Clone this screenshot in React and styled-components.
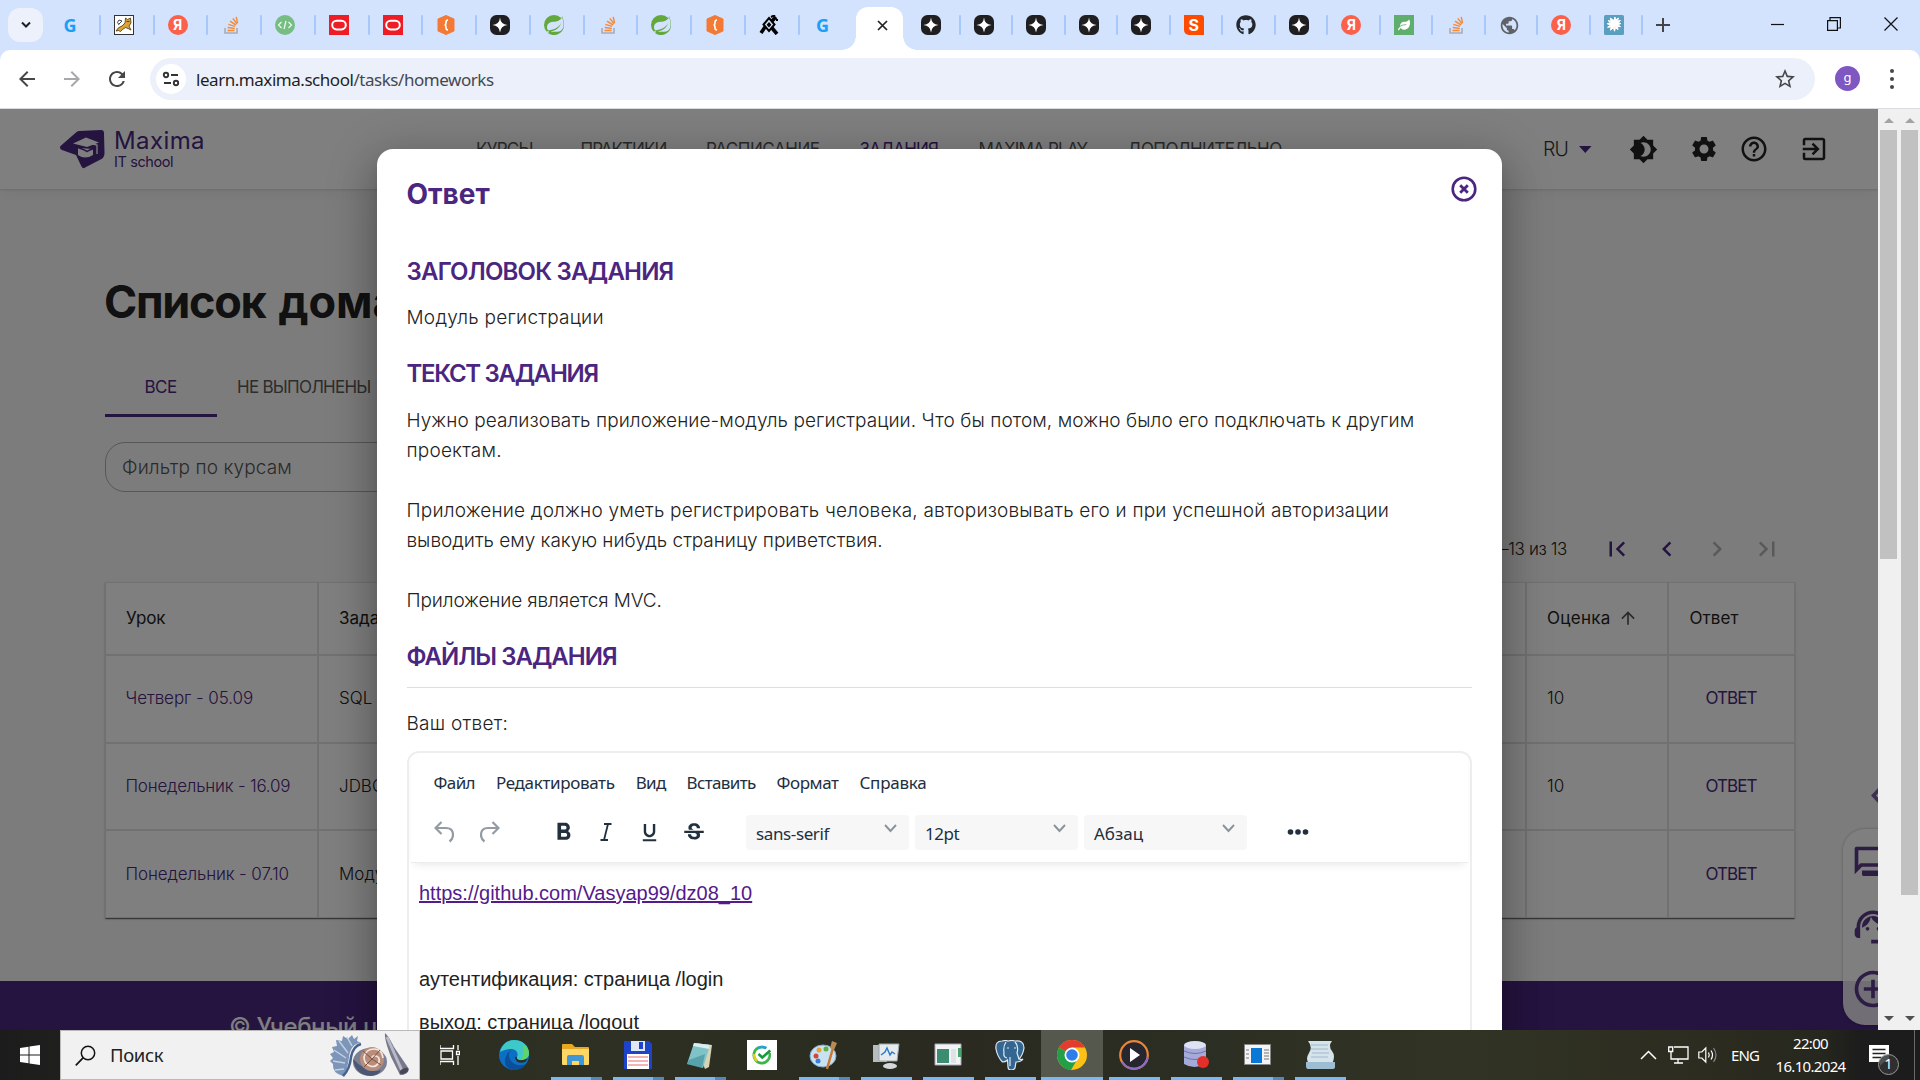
import React from 'react';
import styled, { createGlobalStyle, css } from 'styled-components';
import {
  MdBrightness4, MdSettings, MdHelpOutline, MdExitToApp, MdFirstPage, MdLastPage,
  MdKeyboardArrowLeft, MdKeyboardArrowRight, MdArrowUpward, MdOutlineQuestionAnswer,
  MdSupportAgent, MdAddCircleOutline, MdFormatBold, MdOutlineStrikethroughS, MdStarOutline,
  MdPublic, MdArrowBack, MdArrowForward, MdRefresh, MdFormatUnderlined,
} from 'react-icons/md';
import { FaGithub, FaLeaf } from 'react-icons/fa';
import { SiSpring, SiPostgresql } from 'react-icons/si';

const gilroy = '"Inter", "Noto Sans", sans-serif';
const segoe = '"Noto Sans", "Open Sans", sans-serif';
const purple = '#4b2680';

const Global = createGlobalStyle`
  *, *::before, *::after { box-sizing: border-box; }
  body { margin: 0; overflow: hidden; background: #fff; }
  svg { display: block; flex: none; }
`;
const Txt = styled.span`
  display: inline-block;
  white-space: nowrap;
  letter-spacing: ${(p) => p.$ls || 0}px;
`;
const Screen = styled.div`
  width: 1920px; height: 1080px; display: flex; flex-direction: column; overflow: hidden;
  font-family: ${segoe};
`;

/* ---------- browser chrome ---------- */
const TabStrip = styled.div`
  height: 50px; flex: none; background: #d3e2fd; display: flex; align-items: stretch;
`;
const TabSearch = styled.div`
  width: 35px; height: 34px; margin: 8px 4px 0 8px; border-radius: 12px; background: #ecf1fc;
  display: grid; place-items: center;
`;
const Tab = styled.div`
  width: ${(p) => p.$w}px; flex: none; display: flex; align-items: center; justify-content: space-between;
  padding-left: 13px;
  &::after { content: ''; width: 2px; height: 20px; border-radius: 1px; background: #a8c7fa; }
`;
const ActiveTab = styled.div`
  width: 47px; height: 43px; margin: 7px 5px 0 3px; background: #fff; border-radius: 12px 12px 0 0;
  display: grid; place-items: center; padding: 0 0 7px 6px; position: relative;
  &::before, &::after {
    content: ''; position: absolute; bottom: 0; width: 14px; height: 14px;
  }
  &::before { left: -14px; background: radial-gradient(circle at 0 0, transparent 13.5px, #fff 14px); }
  &::after { right: -14px; background: radial-gradient(circle at 100% 0, transparent 13.5px, #fff 14px); }
`;
const Fav = styled.span`
  width: 20px; height: 20px; display: flex; align-items: center; justify-content: center;
  font: ${(p) => p.$font || `700 15px/20px ${segoe}`};
  color: ${(p) => p.$fg || '#fff'}; background: ${(p) => p.$bg || 'none'}; border-radius: ${(p) => p.$r || 0};
`;
const NewTab = styled.div`display: grid; place-items: center; width: 40px;`;
const WindowButtons = styled.div`
  margin-left: auto; display: flex; align-items: center; gap: 43px; padding: 0 22px 2px 0;
`;
const Toolbar = styled.div`
  height: 59px; flex: none; display: flex; align-items: center; padding: 0 18px 1px 13px;
  background: #fff; border-radius: 10px 10px 0 0; position: relative; border-bottom: 1px solid #d9dbdf;
`;
const ToolbarBack = styled.div`background: linear-gradient(#d3e2fd 50%, #fff 50%);`;
const NavIcon = styled.div`width: 45px; display: flex; padding-left: 2px; color: ${(p) => p.$c || '#474747'};`;
const AddressBar = styled.div`
  width: 1665px; height: 42px; margin-left: 2px; border-radius: 21px; background: #ecf0fa; display: flex; align-items: center;
  padding: 0 18px 0 6px; color: #474747;
`;
const SiteInfo = styled.div`width: 30px; height: 30px; border-radius: 50%; background: #fff; display: grid; place-items: center;`;
const Url = styled.div`margin-left: 10px; padding-top: 2px; flex: 1; font-size: 17px; line-height: 24px; color: #444850; b { font-weight: 400; color: #1f1f1f; }`;
const Avatar = styled.div`
  width: 25px; height: 25px; margin-left: 20px; border-radius: 50%; background: #7e57c2; color: #fff;
  font-size: 13px; line-height: 22px; text-align: center;
`;
const Dots = styled.div`display: grid; gap: 4px; margin: 0 8px 0 auto; i { width: 4px; height: 4px; border-radius: 50%; background: #474747; }`;

/* ---------- page ---------- */
const Viewport = styled.div`height: 921px; flex: none; display: flex; overflow: hidden;`;
const Page = styled.div`
  position: relative; width: 1878px; height: 921px; overflow: hidden; background: #f9f9f9; font-family: ${gilroy}; color: #222;
`;
const Header = styled.header`
  height: 80px; background: #fff; display: flex; align-items: center; padding: 0 49px 0 60px;
  position: relative; box-shadow: 0 1px 2px rgba(0,0,0,.12), 0 6px 14px rgba(0,0,0,.04);
`;
const LogoText = styled.div`
  margin-left: 9px; width: 362px; color: ${purple};
  div { font-size: 24px; line-height: 26px; }
  div + div { font-size: 14.5px; line-height: 16px; }
`;
const Nav = styled.nav`display: flex; font-size: 17px; line-height: 24px; color: #555; padding-bottom: 1px;`;
const NavItem = styled.div`width: ${(p) => p.$w}px; color: ${(p) => (p.$on ? purple : '#555')};`;
const HeaderTools = styled.div`margin-left: auto; display: flex; align-items: center; color: #222;`;
const Lang = styled.div`
  display: flex; align-items: center; font-size: 19.5px; font-weight: 300; color: #333; margin-right: 29px;
  svg { margin-left: 2px; color: ${purple}; }
`;
const ToolIcon = styled.div`width: 30px; margin-right: ${(p) => p.$mr}px;`;
const Content = styled.main`padding: 0 83px 0 105px;`;
const PageTitle = styled.h1`
  display: flex; gap: 13px; margin: 83px 0 0 -1px; font-size: 45px; line-height: 60px; font-weight: 700; color: #222;
`;
const Tabs = styled.div`display: flex; margin-top: 25px; height: 60px; font-size: 17px;`;
const PageTab = styled.div`
  display: flex; align-items: center; padding: 3px 0 0 ${(p) => p.$pl}px; width: ${(p) => p.$w}px;
  color: ${(p) => (p.$on ? purple : '#5a5a5a')}; border-bottom: 3px solid ${(p) => (p.$on ? purple : 'transparent')};
`;
const Filter = styled.div`
  margin-top: 25px; width: 600px; height: 50px; border: 1px solid #aeaeae; border-radius: 20px; padding-left: 16px;
  display: flex; align-items: center; font-size: 19px; font-weight: 300; color: #555;
`;
const Pagination = styled.div`
  height: 62px; margin: 26px 0 2px; padding-right: 3px; display: flex; align-items: center; justify-content: flex-end;
  font-size: 17px; font-weight: 300; color: #222;
`;
const PageRange = styled.div`margin-right: 25px;`;
const PageButton = styled.div`width: 50px; display: grid; place-items: center; color: ${(p) => (p.$off ? '#b3b3b3' : purple)};`;
const Table = styled.div`
  border: 1px solid #e2e2e2; background: #fff; box-shadow: 0 2px 1px -1px rgba(0,0,0,.35), 0 1px 1px rgba(0,0,0,.25), 0 1px 3px rgba(0,0,0,.12);
`;
const Row = styled.div`
  display: grid; grid-template-columns: 213px 1fr 142px 125px; height: ${(p) => (p.$head ? 73 : p.$last ? 86 : 87.5)}px;
  font-size: 17px; font-weight: ${(p) => (p.$head ? 400 : 300)};
  &:last-child > div { border-bottom: 0; }
`;
const Cell = styled.div`
  display: flex; align-items: center; gap: 7px; padding: 0 0 1px ${(p) => p.$pl || 20}px; border-right: 2px solid #e2e2e2; border-bottom: 2px solid #e2e2e2;
  color: ${(p) => (p.$link ? purple : '#222')};
  font-weight: ${(p) => p.$fw || 'inherit'};
  &:last-child { border-right: 0; }
  svg { color: #555; }
`;
const Footer = styled.footer`
  margin-top: 63px; height: 100px; background: #4a2680; color: #fff; padding: 31px 0 0 229px;
  font-size: 24px; line-height: 30px; font-weight: 500; white-space: nowrap;
`;
const SideArrow = styled.div`position: absolute; left: 1870px; top: 677px;`;
const SidePanel = styled.div`
  position: absolute; left: 1843px; top: 720px; width: 60px; height: 196px; border-radius: 22px;
  background: rgba(255,255,255,.84); box-shadow: 0 0 3px rgba(0,0,0,.3); padding: 14px 0 0 8px;
  display: flex; flex-direction: column; gap: 18px; color: #5b3b8a;
`;
const Backdrop = styled.div`position: absolute; inset: 0; background: rgba(0,0,0,.5);`;

/* ---------- dialog ---------- */
const Dialog = styled.section`
  position: absolute; left: 377px; top: 40px; width: 1125px; height: 940px; padding: 25px 30px 0; background: #fff;
  border-radius: 16px 16px 0 0;
  box-shadow: 0 11px 15px -7px rgba(0,0,0,.2), 0 24px 38px 3px rgba(0,0,0,.14), 0 9px 46px 8px rgba(0,0,0,.18);
`;
const DialogHead = styled.div`display: flex; justify-content: space-between; svg { margin: 1px -6px 0 0; }`;
const DialogTitle = styled.h2`margin: 0 0 0 -.5px; font-size: 28px; line-height: 40px; font-weight: 700; color: ${purple};`;
const SectionTitle = styled.h3`margin: ${(p) => p.$mt}px 0 0 -.5px; font-size: 24px; line-height: 36px; font-weight: 600; color: ${purple};`;
const Copy = styled.div`margin: ${(p) => p.$mt}px 0 0 -.5px; font-size: 19px; line-height: 30px; font-weight: 300; color: #222; min-height: 30px;`;
const Line = styled.div`height: 30px;`;
const Rule = styled.hr`margin: 12px 0 0; border: 0; height: 1px; background: #dedede;`;
const Editor = styled.div`
  margin-top: 12px; height: 400px; border: 2px solid #eee; border-radius: 12px; font-family: ${segoe}; color: #222f3e;
`;
const EditorHead = styled.div`
  padding: 18px 0 12px 25px; margin: 0 2px; box-shadow: 0 1px 0 #ececec, 0 6px 8px -4px rgba(34,47,62,.13);
`;
const MenuBar = styled.div`display: flex; gap: 21px; margin-left: -2.5px; font-size: 17px; line-height: 24px;`;
const Tools = styled.div`display: flex; align-items: center; height: 35px; margin: 20px 0 0 -2px;`;
const Tool = styled.div`width: 20px; display: flex; justify-content: center; margin-right: ${(p) => p.$mr}px; padding-bottom: ${(p) => (p.$low ? 0 : 2)}px;`;
const Select = styled.div`
  width: 162.5px; height: 35px; margin-right: 6.5px; border-radius: 4px; background: #f7f7f7; display: flex; justify-content: space-between;
  padding: 7px 12px 0 10px; font-size: 17px; line-height: 24px; svg { margin-top: -3px; }
`;
const More = styled.div`margin-left: 33px; padding-bottom: 2px;`;
const EditorBody = styled.div`
  padding: 16px 0 0 10px; font: 20px/30px "Liberation Sans", Arial, sans-serif; color: #222;
  a { color: #551a8b; text-decoration: underline; }
  p { margin: 0; height: 43px; }
`;

/* ---------- scrollbars ---------- */
const Scrollbar = styled.div`
  width: 21px; background: #f0f0f0; display: flex; flex-direction: column; align-items: center;
  padding: 9px 0;
`;
const Arrow = styled.i`
  border: 5px solid transparent; width: 0; height: 0;
  ${(p) => (p.$up ? css`border-top: 0; border-bottom-color: #a3a3a3;` : css`border-bottom: 0; border-top-color: #505050; margin-top: auto;`)}
`;
const Thumb = styled.div`width: 17px; margin-top: 7px; height: ${(p) => p.$h}px; background: #c1c1c1;`;

/* ---------- taskbar ---------- */
const Taskbar = styled.div`
  height: 50px; flex: none; display: flex; color: #fff;
  background: linear-gradient(90deg, #1c1c1c 0, #1f1f1d 60px, #2c2e23 420px, #2d3022 600px, #2a2a20 950px, #2b2e22 1200px, #313424 1450px, #2c2c20 1700px, #26271e 1820px, #1c1c1c 1860px);
`;
const Start = styled.div`width: 60px; display: grid; place-items: center;`;
const Search = styled.div`
  width: 360px; background: #f1f1f1; border: 1px solid #b9b9b9; display: flex; align-items: center; color: #222; padding: 0 8px 0 14px;
  font-size: 18.5px; svg:last-child { margin-left: auto; }
`;
const SearchLabel = styled.div`margin-left: 14px; line-height: 24px;`;
const TaskView = styled.div`width: 63px; display: grid; place-items: center; padding-right: 3px;`;
const TaskApp = styled.div`
  width: 62px; display: flex; flex-direction: column; align-items: center; padding-top: 10px;
  background: ${(p) => (p.$active ? '#55584c' : 'none')};
`;
const Bar = styled.div`
  margin-top: auto; height: 3px; width: ${(p) => (p.$full ? 62 : 51)}px;
  background: ${(p) => (p.$kind === 'stack' ? 'linear-gradient(90deg,#76b9f5 40px,#5488ba 40px)' : p.$kind ? '#76b9f5' : 'none')};
`;
const Tray = styled.div`margin-left: auto; display: flex; align-items: center;`;
const TrayItem = styled.div`width: ${(p) => p.$w}px; font-size: 15px;`;
const Clock = styled.div`width: 91px; text-align: center; font-size: 15px; line-height: 23px;`;
const ShowDesktop = styled.div`width: 6px; height: 50px; border-left: 1px solid #6a6a66;`;
const Notify = styled.div`position: relative; width: 45px; height: 50px; padding: 15px 0 0 0;`;
const Badge = styled.div`
  position: absolute; left: 9px; top: 24px; width: 21px; height: 21px; border: 1px solid #9a9a9a; border-radius: 50%; background: rgba(50,50,50,.85);
  font-size: 14px; line-height: 18px; text-align: center;
`;

const S = ({ s = 20, w, h, vb = 20, children }) => (
  <svg width={w || s} height={h || s} viewBox={`0 0 ${w || vb} ${h || vb}`} fill="none">{children}</svg>
);

const favs = {
  g: <Fav $fg="#1a9ff5" $font={`700 18px/20px ${segoe}`}>G</Fav>,
  cat: <S><rect x=".5" y=".5" width="19" height="19" fill="#fff" stroke="#333" /><path d="M2 16q2-4 6-5l3-3 .5-5L13.500 4.500l3-1.500L17 8l-2 3 2 4-3-1.500-2.500-1-3 2-2 2-2-1z" fill="#d9a33c" stroke="#4a3510" strokeWidth=".8" /><path d="M5 10q-3-3 0-5l3 1-3 3M12.500 6.500h3" stroke="#444" strokeWidth="1" /></S>,
  ya: <Fav $bg="#fc5f4a" $r="50%" $font={`700 14px/20px ${gilroy}`}>Я</Fav>,
  so: <S><path d="M4 13v5h12v-5" stroke="#a9adb3" strokeWidth="1.6" /><path d="M6.5 15.5h7M6.7 12.6l7 .9M7.3 9.4l6.7 2M9 6.2l6 3.8M11.8 3.4l4.4 5.6M15.2 1.8l1.4 6" stroke="#f48c3a" strokeWidth="1.5" /></S>,
  code: <S><circle cx="10" cy="10" r="10" fill="#76bd84" /><path d="M6.5 7l-3 3 3 3M13.5 7l3 3-3 3M11 6l-2 8" stroke="#e8f6ea" strokeWidth="1.3" /></S>,
  ora: <S><path fill="#ee1c24" d="M0 0h20v20H0z" /><rect x="3.2" y="5.8" width="13.6" height="8.6" rx="4.3" stroke="#fff" strokeWidth="2" /></S>,
  brace: <S><path d="M10 .5l8 3.500v12L10 19.500l-8-3.500V4z" fill="#f37a35" stroke="#f37a35" strokeLinejoin="round" /><path d="M12 5c-2 0-2 1-2 2.5S9.6 10 8.500 10c1.100 0 1.500 1 1.500 2.500S10 15 12 15" stroke="#fff" strokeWidth="1.6" /></S>,
  star: <S><rect width="20" height="20" rx="6.500" fill="#1f1f22" /><path d="M10 2.500q.6 6.900 7.500 7.500-6.900.6-7.500 7.500-.6-6.900-7.500-7.500 6.900-.6 7.500-7.500z" fill="#fff" /></S>,
  spring: <SiSpring size={20} color="#62a83d" />,
  tool: <S><path d="M10 3l5.500 6.500L10 16 4.500 9.500z" stroke="#000" strokeWidth="2" /><path d="M10 7l2.400 2.700L10 12.500 7.600 9.700z" fill="#000" /><path d="M13 6l4-4M2 18l4-6M13 13l5 6" stroke="#000" strokeWidth="3.600" /><path d="M12 2l4-2M17 5h2" stroke="#000" strokeWidth="2" /></S>,
  s: <Fav $bg="#ff4b00" $font={`700 16px/20px ${gilroy}`} $r="0 3px 0 5px">S</Fav>,
  gh: <FaGithub size={20} color="#24292f" />,
  leaf: <Fav $bg="#5fae6e"><FaLeaf size={12} /></Fav>,
  globe: <MdPublic size={21} color="#5f6368" />,
  virus: <S><rect width="20" height="20" rx="1.500" fill="#5b9fc0" /><path d="M10 5l1-3 .5 3 3-2-1 3 3-.5-2.500 2 3 1-3 1.200 2.500 2-3-.3.5 3.300-2.500-2-1 3.500-1-3.500-3 2.500.6-3.300-3.600.4 3-2.100-3.300-1.500 3.300-1L4 5.500l3 .7L6.500 3l2.500 2.200z" fill="#fff" stroke="#fff" strokeLinejoin="round" /></S>,
};
const leftTabs = ['g', 'cat', 'ya', 'so', 'code', 'ora', 'ora', 'brace', 'star', 'spring', 'so', 'spring', 'brace', 'tool'];
const rightTabs = ['star', 'star', 'star', 'star', 'star', 's', 'gh', 'star', 'ya', 'leaf', 'so', 'globe', 'ya', 'virus'];
const LastLeftTab = styled(Tab)`&::after { background: transparent; }`;

const BrowserChrome = () => (
  <>
    <TabStrip>
      <TabSearch><S s={12} vb={12}><path d="M2 3.500l4 4 4-4" stroke="#1f1f1f" strokeWidth="2" /></S></TabSearch>
      {leftTabs.map((t, i) => <Tab key={i} $w={53.75}>{favs[t]}</Tab>)}
      <LastLeftTab $w={53.75}>{favs.g}</LastLeftTab>
      <ActiveTab><S s={11} vb={11}><path d="M1 1l9 9M10 1l-9 9" stroke="#222" strokeWidth="1.700" /></S></ActiveTab>
      {rightTabs.map((t, i) => <Tab key={i} $w={52.5}>{favs[t]}</Tab>)}
      <NewTab><S s={14} vb={14}><path d="M7 0v14M0 7h14" stroke="#444" strokeWidth="2" /></S></NewTab>
      <WindowButtons>
        <S w={13} h={13}><path d="M0 6.500h13" stroke="#111" strokeWidth="1.200" /></S>
        <S w={14} h={14}><path d="M.6 3.600h9.800v9.800H.6zM3 3.500V.6h10.400v10.400h-3" stroke="#111" strokeWidth="1.200" /></S>
        <S w={14} h={14}><path d="M.5.5l13 13M13.500.5l-13 13" stroke="#111" strokeWidth="1.200" /></S>
      </WindowButtons>
    </TabStrip>
    <ToolbarBack>
      <Toolbar>
        <NavIcon><MdArrowBack size={24} /></NavIcon>
        <NavIcon $c="#a6a8ab"><MdArrowForward size={24} /></NavIcon>
        <NavIcon><MdRefresh size={24} /></NavIcon>
        <AddressBar>
          <SiteInfo>
            <S s={18} vb={18}><g stroke="#333" strokeWidth="1.900"><circle cx="4" cy="5" r="2.200" /><path d="M9 5h7M2 13h7" /><circle cx="14" cy="13" r="2.200" /></g></S>
          </SiteInfo>
          <Url><Txt $ls={-0.46}><b>learn.maxima.school</b>/tasks/homeworks</Txt></Url>
          <MdStarOutline size={24} />
        </AddressBar>
        <Avatar>g</Avatar>
        <Dots><i /><i /><i /></Dots>
      </Toolbar>
    </ToolbarBack>
  </>
);

const navItems = [
  ['КУРСЫ', 104.5, -0.7], ['ПРАКТИКИ', 125.5, -0.95], ['РАСПИСАНИЕ', 153.5, -0.45],
  ['ЗАДАНИЯ', 119, -0.8], ['MAXIMA PLAY', 149, -0.8], ['ДОПОЛНИТЕЛЬНО', 160, -0.55],
];
const rows = [
  ['Четверг - 05.09', 'SQL', '10', -0.08],
  ['Понедельник - 16.09', 'JDBC', '10', -0.22],
  ['Понедельник - 07.10', 'Модуль регистрации', '', -0.12],
];

const SitePage = () => (
  <>
    <Header>
      <S w={45} h={39}>
        <path d="M16 2.500Q17 1 19 .9L41 0q3 0 3 3l.5 20q0 4-3 6L26 37q-3 2.500-4.500-.5L16 25 2 20q-3-1-1.500-4z" fill={purple} />
        <path d="M13 13.500l13-6 13 5-12 4.500zM18 18v7q7 5 15 0v-6" fill="#fff" /><path d="M17 17q8 3 10 4.500 3-2 7-3" stroke={purple} strokeWidth="1.500" /><path d="M25 12l12 3v9" stroke="#fff" strokeWidth="1.300" />
      </S>
      <LogoText>
        <div><Txt $ls={0.4}>Maxima</Txt></div>
        <div><Txt $ls={-0.4}>IT school</Txt></div>
      </LogoText>
      <Nav>{navItems.map(([t, w, ls]) => <NavItem key={t} $w={w} $on={t === 'ЗАДАНИЯ'}><Txt $ls={ls}>{t}</Txt></NavItem>)}</Nav>
      <HeaderTools>
        <Lang><Txt $ls={-0.9}>RU</Txt><S w={30} h={30}><path d="M9 12h12.500l-6.200 7z" fill="currentColor" /></S></Lang>
        <ToolIcon $mr={30}><MdBrightness4 size={29} /></ToolIcon>
        <ToolIcon $mr={20}><MdSettings size={30} /></ToolIcon>
        <ToolIcon $mr={30}><MdHelpOutline size={30} /></ToolIcon>
        <ToolIcon $mr={0}><MdExitToApp size={30} /></ToolIcon>
      </HeaderTools>
    </Header>
    <Content>
      <PageTitle><Txt $ls={-1.3}>Список</Txt><Txt>домашних заданий</Txt></PageTitle>
      <Tabs>
        <PageTab $on $w={112} $pl={39.5}><Txt $ls={-0.5}>ВСЕ</Txt></PageTab>
        <PageTab $w={200} $pl={20}><Txt $ls={-0.75}>НЕ ВЫПОЛНЕНЫ</Txt></PageTab>
      </Tabs>
      <Filter><Txt $ls={0.1}>Фильтр по курсам</Txt></Filter>
      <Pagination>
        <PageRange><Txt $ls={-0.36}>–13 из 13</Txt></PageRange>
        <PageButton><MdFirstPage size={30} /></PageButton>
        <PageButton><MdKeyboardArrowLeft size={30} /></PageButton>
        <PageButton $off><MdKeyboardArrowRight size={30} /></PageButton>
        <PageButton $off><MdLastPage size={30} /></PageButton>
      </Pagination>
      <Table>
        <Row $head>
          <Cell><Txt $ls={-0.1}>Урок</Txt></Cell>
          <Cell><Txt>Задание</Txt></Cell>
          <Cell><Txt $ls={0.3}>Оценка</Txt><MdArrowUpward size={20} /></Cell>
          <Cell $pl={20.5}><Txt $ls={0.05}>Ответ</Txt></Cell>
        </Row>
        {rows.map(([a, b, c, ls], i) => (
          <Row key={a} $last={i === rows.length - 1}>
            <Cell $pl={19.5} $link><Txt $ls={ls}>{a}</Txt></Cell>
            <Cell><Txt>{b}</Txt></Cell>
            <Cell><Txt>{c}</Txt></Cell>
            <Cell $pl={36.5} $link $fw={400}><Txt $ls={-0.96}>ОТВЕТ</Txt></Cell>
          </Row>
        ))}
      </Table>
    </Content>
    <Footer><Txt $ls={-0.4}>© Учебный центр</Txt></Footer>
    <SideArrow><S w={20} h={20}><path d="M10.500 2L3.500 9.500l7 7.500" stroke="#7a5fa3" strokeWidth="3.600" /></S></SideArrow>
    <SidePanel>
      <MdOutlineQuestionAnswer size={44} />
      <MdSupportAgent size={44} />
      <MdAddCircleOutline size={44} />
    </SidePanel>
    <Backdrop />
  </>
);

const Chevron = () => <S w={13} h={20}><path d="M1 6l5.500 6L12 6" stroke="#8a929b" strokeWidth="1.900" /></S>;
const menu = [['Файл', -0.6], ['Редактировать', -0.34], ['Вид', -0.65], ['Вставить', -0.64], ['Формат', -0.45], ['Справка', -0.24]];

const AnswerDialog = () => (
  <Dialog>
    <DialogHead>
      <DialogTitle><Txt>Ответ</Txt></DialogTitle>
      <S s={28} vb={28}><circle cx="14" cy="14" r="11.300" stroke={purple} strokeWidth="2.600" /><path d="M10.200 10.200l7.600 7.600M17.800 10.200l-7.600 7.600" stroke={purple} strokeWidth="2.800" /></S>
    </DialogHead>
    <SectionTitle $mt={40}><Txt $ls={-0.79}>ЗАГОЛОВОК ЗАДАНИЯ</Txt></SectionTitle>
    <Copy $mt={13}><Txt $ls={0.26}>Модуль регистрации</Txt></Copy>
    <SectionTitle $mt={23}><Txt $ls={-1.31}>ТЕКСТ ЗАДАНИЯ</Txt></SectionTitle>
    <Copy $mt={14}>
      <Line><Txt $ls={0.08}>Нужно реализовать приложение-модуль регистрации. Что бы потом, можно было его подключать к другим</Txt></Line>
      <Line><Txt $ls={0.2}>проектам.</Txt></Line>
      <Line />
      <Line><Txt $ls={0.2}>Приложение должно уметь регистрировать человека, авторизовывать его и при успешной авторизации</Txt></Line>
      <Line><Txt $ls={-0.02}>выводить ему какую нибудь страницу приветствия.</Txt></Line>
      <Line />
      <Line><Txt $ls={-0.12}>Приложение является MVC.</Txt></Line>
    </Copy>
    <SectionTitle $mt={23}><Txt $ls={-0.98}>ФАЙЛЫ ЗАДАНИЯ</Txt></SectionTitle>
    <Rule />
    <Copy $mt={21}><Txt $ls={0.27}>Ваш ответ:</Txt></Copy>
    <Editor>
      <EditorHead>
        <MenuBar>{menu.map(([m, ls]) => <Txt key={m} $ls={ls}>{m}</Txt>)}</MenuBar>
        <Tools>
          <Tool $mr={26}><S w={20} h={22}><path d="M7.500 1L1.500 7l6 6M2 7h10q7 0 7 7 0 4-3.500 6.500" stroke="#959ba3" strokeWidth="2.200" /></S></Tool>
          <Tool $mr={53}><S w={20} h={22}><path d="M12.500 1l6 6-6 6M18 7H8q-7 0-7 7 0 4 3.500 6.500" stroke="#959ba3" strokeWidth="2.200" /></S></Tool>
          <Tool $mr={23} $low><MdFormatBold size={29} /></Tool>
          <Tool $mr={23.5}><S w={12} h={18}><path d="M4 1h7.500M.5 17H8M8 1L4 17" stroke="#222f3e" strokeWidth="1.800" /></S></Tool>
          <Tool $mr={24} $low><MdFormatUnderlined size={23} /></Tool>
          <Tool $mr={42.5} $low><MdOutlineStrikethroughS size={26} /></Tool>
          <Select><Txt $ls={-0.38}>sans-serif</Txt><Chevron /></Select>
          <Select><Txt $ls={-0.45}>12pt</Txt><Chevron /></Select>
          <Select><Txt>Абзац</Txt><Chevron /></Select>
          <More><S w={24} h={8}><g fill="#222f3e"><circle cx="4.500" cy="4" r="2.800" /><circle cx="12" cy="4" r="2.800" /><circle cx="19.500" cy="4" r="2.800" /></g></S></More>
        </Tools>
      </EditorHead>
      <EditorBody>
        <p><Txt><a>https://github.com/Vasyap99/dz08_10</a></Txt></p>
        <p />
        <p><Txt>аутентификация: страница /login</Txt></p>
        <p><Txt>выход: страница /logout</Txt></p>
      </EditorBody>
    </Editor>
  </Dialog>
);

const A = (p) => <S s={30} vb={30} {...p} />;
const apps = [
  [null, <A><circle cx="15" cy="15" r="15" fill="#0c6fc4" /><path d="M1 12C3 4 9 0 15 0c9 0 15 6 15 13 0 5-4 7-8 7-3 0-5-1-4-3 2-4-1-8-6-8-5 0-9 2-11 3z" fill="#3fc8c8" /><path d="M24 4q6 4 6 9.500c0 4-4 6.500-8 6.500q4-8 2-16z" fill="#5fd46b" /><path d="M12 9c-3 4-3 9 1 13 4 4 9 4 14 2-3 4-7 6-12 6C5 29 2 20 12 9z" fill="#0a4f9a" /><path d="M18 17q-1 3 4 3.200 4 0 6.500-2-1 4-5.500 4.500-7 0-7-6z" fill="#2c2e23" /></A>],
  ['stack', <A><path d="M1 5q0-1 1-1h9l3 3h13q1 0 1 1v16H1z" fill="#e9a820" /><path d="M1 9h27v15q0 1-1 1H2q-1 0-1-1z" fill="#ffd766" /><path d="M6 25V17q0-2 2-2h13q2 0 2 2v8h-5v-4h-7v4z" fill="#3f97d8" /></A>],
  ['stack', <A><path d="M1 1h25l3 3v25H1z" fill="#1d44c8" /><path fill="#dfe6f5" d="M8 1h14v10H8z" /><path fill="#1d44c8" d="M16 2h4v7h-4z" /><path fill="#fff" d="M4 14h22v15H4z" /><path d="M5 17h20M5 21h20M5 25h20" stroke="#ee9c9c" strokeWidth="1.500" /></A>],
  ['stack', <A><path d="M9 3l18 2-3 22-4 2z" fill="#d8d2b4" /><path d="M9 3l16 2-7 23L2 24z" fill="#7fc3c9" /><path d="M9 3l16 2-1 4L8 6z" fill="#d9eef0" /><path d="M4 20l16-6-3 14L2 24z" fill="#3d8d97" opacity=".6" /></A>],
  [null, <A><path fill="#fff" d="M0 0h30v30H0z" /><path d="M22.500 13a8 8 0 1 1-4-5" stroke="#3cb54a" strokeWidth="2.600" /><path d="M7.200 14a8 8 0 0 0 3 7" stroke="#d9d022" strokeWidth="2.600" /><path d="M11 8.200q4-2.500 8.500 0" stroke="#28a0d8" strokeWidth="2.600" /><path d="M11.500 14l3.800 3.500 8-7" stroke="#159a3c" strokeWidth="2.600" /></A>],
  ['stack', <A><ellipse cx="14" cy="16" rx="13" ry="11" fill="#c9e2f2" stroke="#7fa9c8" /><circle cx="7" cy="16" r="2.500" fill="#d8433b" /><circle cx="10" cy="10" r="2.500" fill="#e8a13a" /><circle cx="17" cy="9" r="2.500" fill="#5cb13f" /><circle cx="9" cy="21" r="2.500" fill="#3b7fd0" /><path d="M24 8l-6 21" stroke="#c77a30" strokeWidth="2.500" /><path d="M23 1l5 2-3 7-4-2z" fill="#b98a52" /></A>],
  ['one', <A><path fill="#b8bcc0" d="M2 5h14v17H2z" /><path fill="#e8ebee" stroke="#9aa" d="M8 4h20l-2 17H8z" /><path d="M10 15l4-3 2-4 3 7 2-3 3 2" stroke="#2c7fc9" strokeWidth="1.500" /><ellipse cx="19" cy="26" rx="7" ry="3" fill="#d5d8db" /></A>],
  ['one', <A><path fill="#f1f3f5" stroke="#aab" d="M2 4h26v21H2z" /><path fill="#3b8c70" d="M4 9h12v14H4z" /><path fill="#4ba36f" d="M25 8h3v9h-3z" /><path fill="#dfe2e6" d="M18 9h5v14h-5z" /></A>],
  ['one', <A><path d="M1 9Q0 1 7 1q4-1 6 0 4-1 7 0 9-1 9 7-1 7-5 11 3 1 4 0-2 3-7 3l-1 6q-1 2-4 2t-3-3l-.5-7q-2 2-5 2-5-5-6.500-13z" fill="#336791" stroke="#dfe8f0" strokeWidth="1.200" /><path d="M11 2q-3 4-2 11-1 4 3 5M20 2q4 4 2 11l2 6M15 17v9M12 8h2M19 8h2" stroke="#dfe8f0" strokeWidth="1.200" /></A>],
  ['full', <A><circle cx="15" cy="15" r="15" fill="#fbc116" /><path d="M15 15L2 7.500A15 15 0 0 1 28 7.500H15z" fill="#e33b2e" /><path d="M15 15L2 7.500A15 15 0 0 0 14 30l7-12z" fill="#23a047" /><circle cx="15" cy="15" r="7.500" fill="#fff" /><circle cx="15" cy="15" r="5.800" fill="#2f7de9" /></A>],
  ['one', <A><circle cx="15" cy="15" r="13.800" fill="#26262e" stroke="#e8853b" strokeWidth="2.200" /><path d="M3 22a14 14 0 0 0 25.800-5" stroke="#8b6bc6" strokeWidth="2.200" /><path d="M11 8l10 7-10 7z" fill="#fff" /></A>],
  ['one', <A><path d="M3 5v19q10 6 22 0V5z" fill="#a5aad8" /><ellipse cx="14" cy="5" rx="11" ry="4" fill="#dfe1f5" /><path d="M3 11q11 5 22 0M3 17q11 5 22 0" stroke="#6d73ad" /><circle cx="22" cy="22" r="6" fill="#e32f2a" /></A>],
  ['stack', <A><path fill="#f4f4f4" stroke="#888" d="M1.500 4.500h26v20h-26z" /><path fill="#0a78d6" d="M8 8h11v15H8z" /><path d="M3 10h3M3 14h3M3 18h3M21 10h5M21 13h5M21 16h5M21 19h5" stroke="#777" /></A>],
  ['one', <A><path d="M3 1h24q-4 5 0 10t0 13H4q-4-5 0-11T3 1z" fill="#d4e3ec" /><path d="M6 5h17M6 9h17M7 13h17M6 17h17" stroke="#a3b9c8" /><path d="M1 22h29v5q0 2-3 2H3q-2 0-2-3z" fill="#9dbdd3" /></A>],
];

const TaskbarView = () => (
  <Taskbar>
    <Start><S s={20} vb={20}><path d="M0 3l8.500-1.200V9.500H0zM9.500 1.600L20 0v9.500H9.500zM0 10.500h8.500v7.700L0 17zM9.500 10.500H20V20L9.500 18.400z" fill="#fff" /></S></Start>
    <Search>
      <S s={21} vb={21}><circle cx="13" cy="8" r="6.700" stroke="#111" strokeWidth="1.500" /><path d="M8.300 12.700L.8 20.300" stroke="#111" strokeWidth="1.700" /></S>
      <SearchLabel><Txt $ls={-0.35}>Поиск</Txt></SearchLabel>
      <S w={82} h={44}>
        <path d="M32 10Q22 10 20 24q-1 12-6 19Q3 40 4 31l-3-3 3-3-3-4 4-2-2-5 5-1-1-6 6 1 1-5 5 3 4-4 2 4 4-3-1 5z" fill="#7c95b8" />
        <path d="M19 20L10 8M17 25L5 17M16 30L4 28M15 36L6 37M23 13L18 4" stroke="#c3d1e2" strokeWidth="1.500" />
        <path d="M32 11Q24 13 22 24q-1 12-8 19" stroke="#46628c" strokeWidth="2.500" />
        <ellipse cx="41" cy="29" rx="17" ry="14" fill="#7b7f92" /><path d="M24 26q2 16 18 17 8-1 10-6-14 4-28-11z" fill="#4b5875" />
        <circle cx="43" cy="26" r="12" fill="#b98d7b" /><path d="M43 26q0-4 4-3t3 6q-3 6-9 4t-6-9q2-8 10-8t9 9" stroke="#f2e6dc" strokeWidth="1.700" /><path d="M43 26l-9-8M43 26l8-9M43 26l-8 8M43 26l9 6" stroke="#7d4f42" />
        <path d="M56 0q3 2 9 14l15 22q-1 6-9 6L62 24Q55 6 56 0z" fill="#77788a" /><path d="M58 4l16 36" stroke="#b9bac8" strokeWidth="3" /><ellipse cx="75" cy="38" rx="4.500" ry="2.500" fill="#4a4658" transform="rotate(-25 75 38)" />
      </S>
    </Search>
    <TaskView><S s={20} vb={20}><path d="M0 0v3.500h13.500V0M0 20v-3.500h13.500V20M1 6h11.500v8H1zM18 0v5M18 11v9M16.500 6.500h3v3h-3z" stroke="#fff" strokeWidth="1.300" /></S></TaskView>
    {apps.map(([k, icon], i) => <TaskApp key={i} $active={k === 'full'}>{icon}<Bar $kind={k} $full={k === 'full'} /></TaskApp>)}
    <Tray>
      <TrayItem $w={28}><S w={17} h={10}><path d="M1 9l7.500-7.500L16 9" stroke="#fff" strokeWidth="1.500" /></S></TrayItem>
      <TrayItem $w={30}><S w={21} h={18}><path d="M6 1h14v12H3V6M.7 1h4v4.500h-4zM10 13v3.500M6 17h9" stroke="#fff" strokeWidth="1.300" /></S></TrayItem>
      <TrayItem $w={33}><S w={20} h={18}><path d="M.8 6h3l4-4v14l-4-4h-3z" stroke="#fff" strokeWidth="1.200" /><path d="M10.500 6.500q1.500 2.500 0 5M13 4.500q3 4.500 0 9" stroke="#fff" strokeWidth="1.200" /><path d="M15.500 2q5 7 0 14" stroke="#888" strokeWidth="1.200" /></S></TrayItem>
      <TrayItem $w={34}><Txt $ls={-0.85}>ENG</Txt></TrayItem>
      <Clock><Txt $ls={-0.67}>22:00</Txt><br /><Txt $ls={-0.67}>16.10.2024</Txt></Clock>
      <TrayItem $w={13} />
      <Notify><S w={20} h={21}><path d="M0 0h20v17h-5l-4 4v-4H0z" fill="#fff" /><path d="M3.500 4.500h13M3.500 8.500h13M3.500 12.500h9" stroke="#222" strokeWidth="1.300" /></S><Badge>1</Badge></Notify>
      <ShowDesktop />
    </Tray>
  </Taskbar>
);

export default function App() {
  return (
    <Screen>
      <Global />
      <BrowserChrome />
      <Viewport>
        <Page><SitePage /><AnswerDialog /></Page>
        <Scrollbar><Arrow $up /><Thumb $h={429} /><Arrow /></Scrollbar>
        <Scrollbar><Arrow $up /><Thumb $h={765} /><Arrow /></Scrollbar>
      </Viewport>
      <TaskbarView />
    </Screen>
  );
}
